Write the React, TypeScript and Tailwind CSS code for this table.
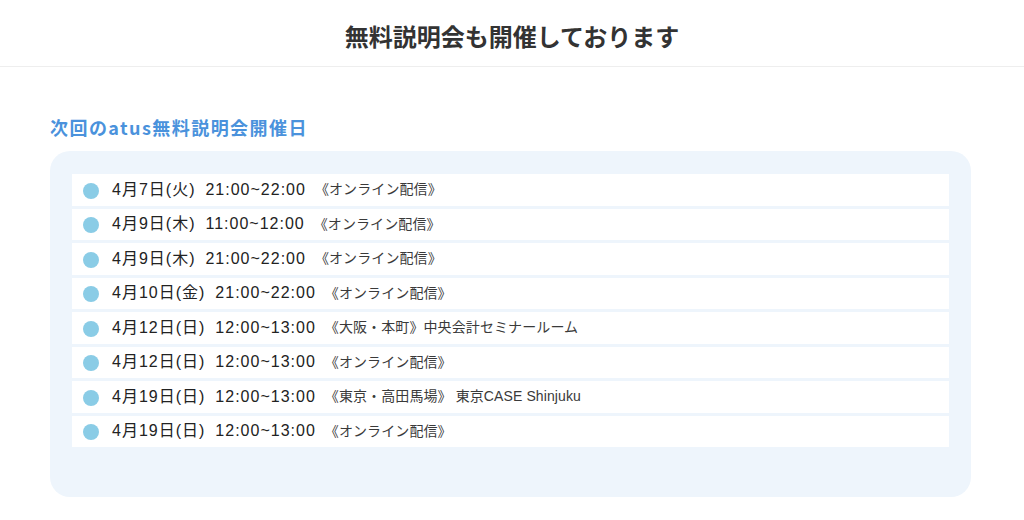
import React from 'react';

interface SessionItem {
  date: string;
  time: string;
  place: string;
}

const sessions: SessionItem[] = [
  { date: '4月7日(火)', time: '21:00~22:00', place: '《オンライン配信》' },
  { date: '4月9日(木)', time: '11:00~12:00', place: '《オンライン配信》' },
  { date: '4月9日(木)', time: '21:00~22:00', place: '《オンライン配信》' },
  { date: '4月10日(金)', time: '21:00~22:00', place: '《オンライン配信》' },
  { date: '4月12日(日)', time: '12:00~13:00', place: '《大阪・本町》中央会計セミナールーム' },
  { date: '4月12日(日)', time: '12:00~13:00', place: '《オンライン配信》' },
  { date: '4月19日(日)', time: '12:00~13:00', place: '《東京・高田馬場》 東京CASE Shinjuku' },
  { date: '4月19日(日)', time: '12:00~13:00', place: '《オンライン配信》' },
];

const SessionRow: React.FC<{ item: SessionItem }> = ({ item }) => (
  <li className="flex h-[31.5px] items-center bg-white pl-[11px] font-['Liberation_Sans','Noto_Sans_CJK_JP',sans-serif]">
    <span className="mt-[2px] h-4 w-4 shrink-0 rounded-full bg-[#8acce6]" />
    <span className="ml-[13px] text-[16px] tracking-[1px] text-[#222]">{item.date}</span>
    <span className="ml-[10px] text-[16px] tracking-[1px] text-[#222]">{item.time}</span>
    <span className="ml-[9px] text-[14px] tracking-[0.1px] text-[#3a3a3a]">{item.place}</span>
  </li>
);

export default function App() {
  return (
    <div className="min-h-[520px] bg-white font-['Noto_Sans_CJK_JP','Noto_Sans',sans-serif]">
      <header className="flex h-[67px] items-center justify-center border-b border-[#eeeeee] pt-[6px]">
        <h1 className="text-[24px] font-bold text-[#333]">無料説明会も開催しております</h1>
      </header>

      <section className="mx-[50px] w-[921px]">
        <h2 className="mt-[46px] h-[28px] text-[18px] leading-[28px] font-bold tracking-[0.08em] text-[#4a92dc]">
          次回のatus無料説明会開催日
        </h2>
        <div className="mt-[10px] rounded-[20px] bg-[#eef5fc] px-[22px] pt-[23px] pb-[50px]">
          <ul className="flex flex-col gap-[3px]">
            {sessions.map((s, i) => (
              <SessionRow key={i} item={s} />
            ))}
          </ul>
        </div>
      </section>
    </div>
  );
}
